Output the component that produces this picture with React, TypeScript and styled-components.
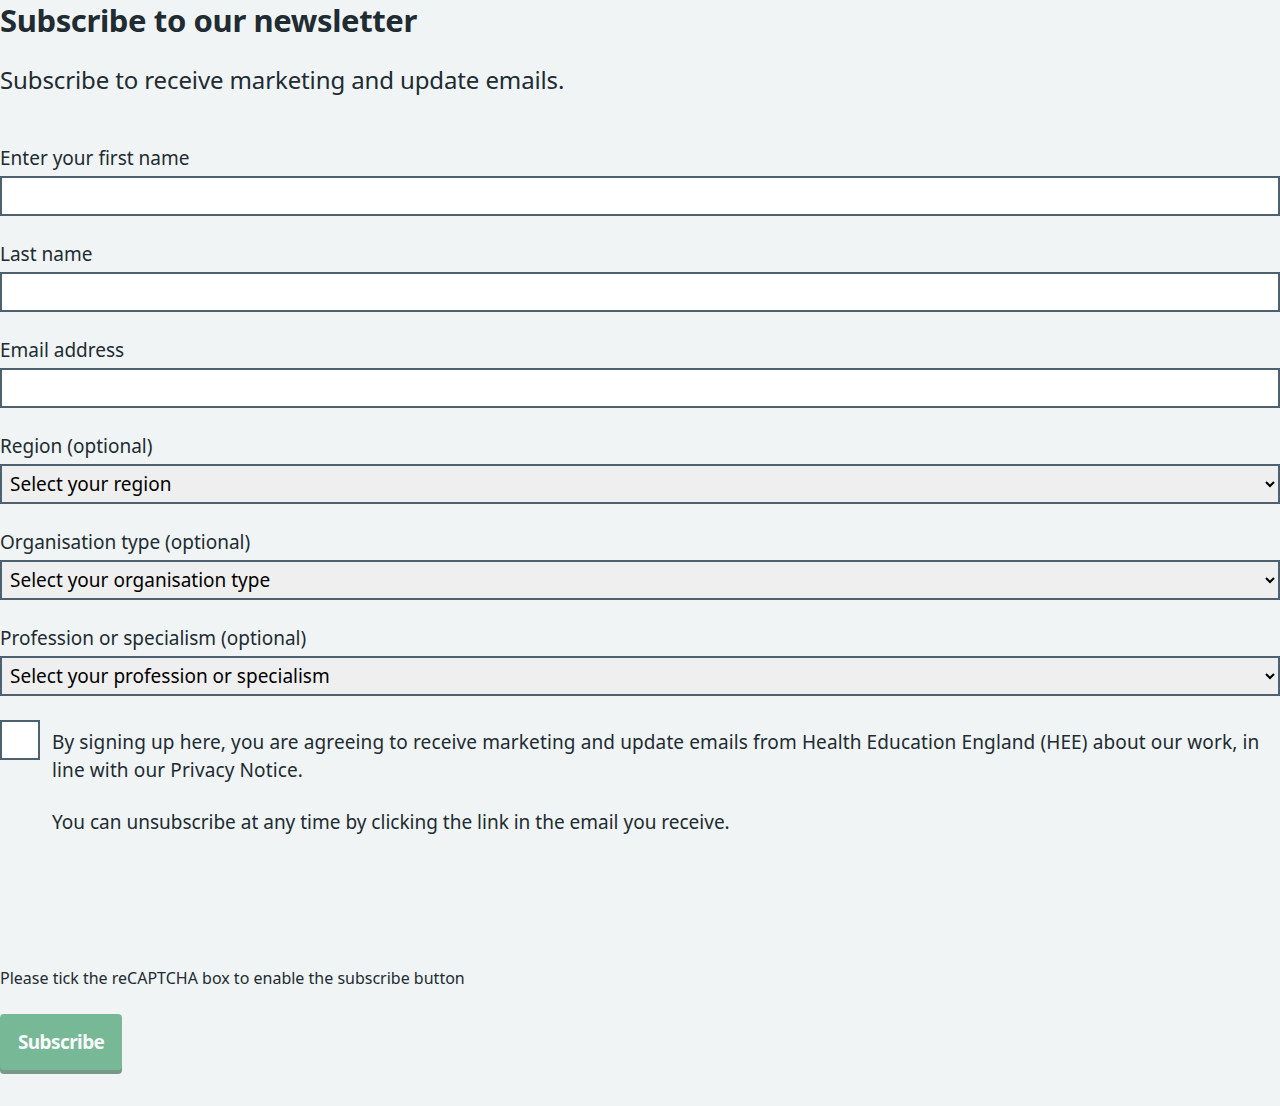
import React from "react";
import styled, { createGlobalStyle } from "styled-components";

const GlobalStyle = createGlobalStyle`
  html, body {
    margin: 0;
    padding: 0;
    background: #f0f4f5;
  }
  body {
    font-family: "Noto Sans", "Open Sans", Arial, sans-serif;
    color: #212b32;
  }
  * { box-sizing: border-box; }
`;

const Page = styled.main`
  width: 1280px;
  min-height: 1106px;
  padding: 0 0 32px;
`;

const Heading = styled.h2`
  margin: 0 0 24px;
  font-size: 31px;
  line-height: 40px;
  font-weight: 700;
  letter-spacing: -0.38px;
  color: #212b32;
`;

const Lead = styled.p`
  margin: 0 0 48px;
  font-size: 24px;
  line-height: 32px;
  font-weight: 400;
  letter-spacing: -0.12px;
`;

const FormGroup = styled.div`
  margin-bottom: 24px;
`;

const Label = styled.label`
  display: block;
  margin-bottom: 4px;
  font-size: 19px;
  line-height: 28px;
`;

const TextInput = styled.input`
  display: block;
  width: 100%;
  height: 40px;
  margin: 0;
  padding: 4px;
  border: 2px solid #4c6272;
  border-radius: 0;
  background: #ffffff;
  font-family: inherit;
  font-size: 19px;
  color: #212b32;
`;

const Select = styled.select`
  display: block;
  width: 100%;
  height: 40px;
  margin: 0;
  padding: 0 4px;
  border: 2px solid #4c6272;
  border-radius: 0;
  background-color: #efefef;
  font-family: inherit;
  font-size: 19px;
  color: #000000;
`;

const CheckRow = styled.div`
  display: flex;
  align-items: flex-start;
`;

const CheckBox = styled.input`
  appearance: none;
  flex: 0 0 40px;
  width: 40px;
  height: 40px;
  margin: 0;
  border: 2px solid #4c6272;
  background: #ffffff;
  border-radius: 0;
`;

const CheckText = styled.div`
  padding: 8px 12px 4px;
  font-size: 19px;
  line-height: 28px;
`;

const CheckLabel = styled.label`
  display: block;
  margin: 0;
  letter-spacing: 0.12px;
`;

const Note = styled.p`
  margin: 24px 0 0;
  font-size: 19px;
  line-height: 28px;
`;

const CaptchaSlot = styled.div`
  height: 102px;
  margin-bottom: 24px;
`;

const SmallText = styled.p`
  margin: 0 0 24px;
  font-size: 16px;
  line-height: 24px;
`;

const Button = styled.button`
  display: inline-block;
  margin: 0;
  padding: 12px 16px;
  border: 2px solid transparent;
  border-radius: 4px;
  background: #007f3b;
  box-shadow: 0 4px 0 #00401e;
  opacity: 0.5;
  color: #ffffff;
  font-family: inherit;
  font-size: 19px;
  line-height: 28px;
  font-weight: 700;
  letter-spacing: -0.6px;
  cursor: default;
`;

const regions = ["Select your region"];
const orgs = ["Select your organisation type"];
const professions = ["Select your profession or specialism"];

export default function App() {
  return (
    <>
      <GlobalStyle />
      <Page>
        <Heading>Subscribe to our newsletter</Heading>
        <Lead>Subscribe to receive marketing and update emails.</Lead>
        <form onSubmit={(e) => e.preventDefault()}>
          <FormGroup>
            <Label htmlFor="first-name">Enter your first name</Label>
            <TextInput id="first-name" type="text" />
          </FormGroup>
          <FormGroup>
            <Label htmlFor="last-name">Last name</Label>
            <TextInput id="last-name" type="text" />
          </FormGroup>
          <FormGroup>
            <Label htmlFor="email">Email address</Label>
            <TextInput id="email" type="email" />
          </FormGroup>
          <FormGroup>
            <Label htmlFor="region">Region (optional)</Label>
            <Select id="region" defaultValue={regions[0]}>
              {regions.map((r) => (
                <option key={r}>{r}</option>
              ))}
            </Select>
          </FormGroup>
          <FormGroup>
            <Label htmlFor="org">Organisation type (optional)</Label>
            <Select id="org" defaultValue={orgs[0]}>
              {orgs.map((r) => (
                <option key={r}>{r}</option>
              ))}
            </Select>
          </FormGroup>
          <FormGroup>
            <Label htmlFor="prof">Profession or specialism (optional)</Label>
            <Select id="prof" defaultValue={professions[0]}>
              {professions.map((r) => (
                <option key={r}>{r}</option>
              ))}
            </Select>
          </FormGroup>
          <CheckRow>
            <CheckBox id="consent" type="checkbox" />
            <CheckText>
              <CheckLabel htmlFor="consent">
                By signing up here, you are agreeing to receive marketing and update emails from Health
                Education England (HEE) about our work, in line with our Privacy Notice.
              </CheckLabel>
              <Note>You can unsubscribe at any time by clicking the link in the email you receive.</Note>
            </CheckText>
          </CheckRow>
          <CaptchaSlot />
          <SmallText>Please tick the reCAPTCHA box to enable the subscribe button</SmallText>
          <Button type="submit" disabled>
            Subscribe
          </Button>
        </form>
      </Page>
    </>
  );
}
